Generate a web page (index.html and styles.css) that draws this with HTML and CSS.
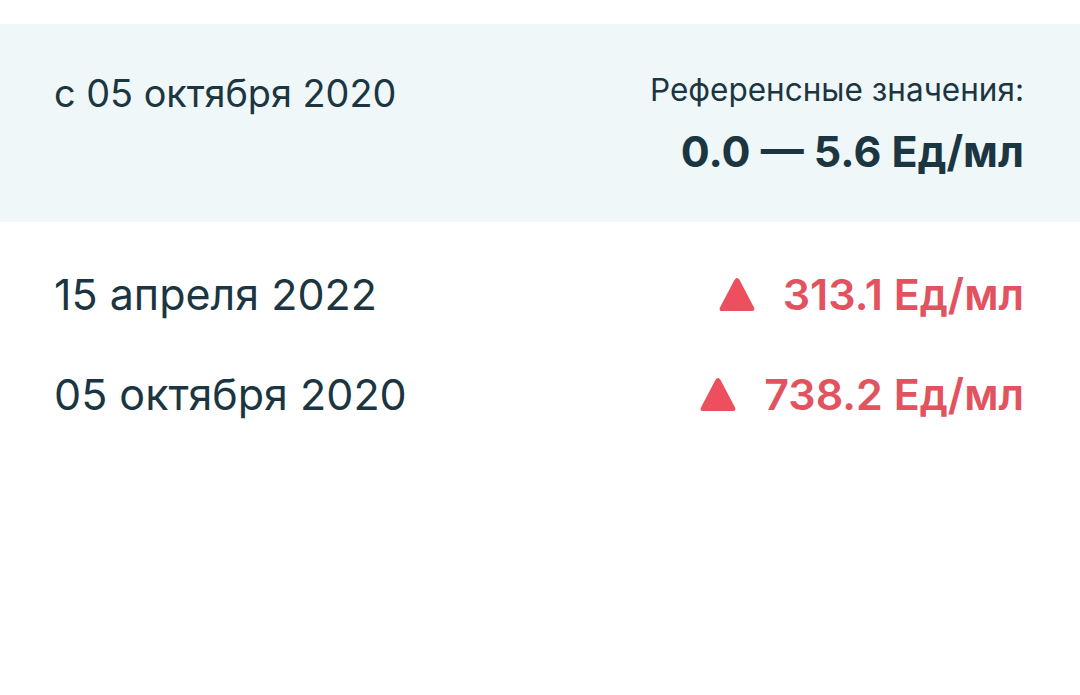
FILE: index.html
```html
<!DOCTYPE html>
<html lang="ru">
<head>
<meta charset="utf-8">
<link rel="stylesheet" href="styles.css">
</head>
<body>
<div class="page">
  <section class="ref">
    <div class="ref-date">с 05 октября 2020</div>
    <div class="ref-values">
      <div class="ref-label">Референсные значения:</div>
      <div class="ref-range">0.0 — 5.6 Ед/мл</div>
    </div>
  </section>
  <section class="rows">
    <div class="row">
      <div class="row-date">15 апреля 2022</div>
      <div class="row-value">
        <svg class="tri" viewBox="0 0 36 37" width="36" height="37"><path d="M15.3 4.2 Q18 0 20.7 4.2 L34.9 31.2 Q36.6 35 32.6 35 L3.4 35 Q-0.6 35 1.1 31.2 Z"/></svg>
        <span>313.1 Ед/мл</span>
      </div>
    </div>
    <div class="row">
      <div class="row-date">05 октября 2020</div>
      <div class="row-value">
        <svg class="tri" viewBox="0 0 36 37" width="36" height="37"><path d="M15.3 4.2 Q18 0 20.7 4.2 L34.9 31.2 Q36.6 35 32.6 35 L3.4 35 Q-0.6 35 1.1 31.2 Z"/></svg>
        <span>738.2 Ед/мл</span>
      </div>
    </div>
  </section>
</div>
</body>
</html>
```

FILE: styles.css
```css
html, body {
  margin: 0;
  padding: 0;
  background: #ffffff;
}
body {
  font-family: Inter, "Noto Sans", "Liberation Sans", sans-serif;
  color: #1b3641;
}
.page {
  padding-top: 24px;
}
.ref {
  background: #eff7f9;
  height: 198px;
  box-sizing: border-box;
  padding: 47px 56px 0 54px;
  display: flex;
  justify-content: space-between;
  align-items: flex-start;
}
.ref-date {
  font-size: 37.8px;
  line-height: 44px;
}
.ref-values {
  display: flex;
  flex-direction: column;
  align-items: flex-end;
}
.ref-label {
  font-size: 31.5px;
  line-height: 38px;
}
.ref-range {
  font-size: 43px;
  font-weight: 700;
  line-height: 50px;
  margin-top: 17px;
}
.rows {
  padding: 22px 56px 0 54px;
}
.row {
  height: 100px;
  display: flex;
  justify-content: space-between;
  align-items: center;
}
.row-date {
  font-size: 43px;
  line-height: 52px;
}
.row-value {
  display: flex;
  align-items: center;
  gap: 28px;
  font-size: 43px;
  line-height: 52px;
  font-weight: 600;
  color: #e2525f;
}
.tri {
  fill: #ee4f5e;
  display: block;
}
```
